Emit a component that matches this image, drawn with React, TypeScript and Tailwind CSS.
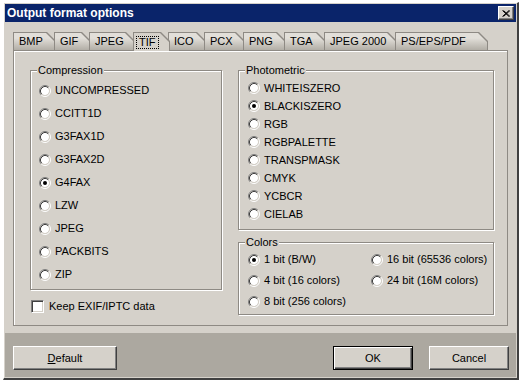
import React from "react";

/**
 * OutputFormatDialog — classic Windows-style "Output format options" dialog,
 * TIF tab selected.
 */

interface TabDef {
  label: string;
  /** width class incl. the 2px that slides under the next tab */
  width: string;
  active?: boolean;
  last?: boolean;
}

const TABS: TabDef[] = [
  { label: "BMP", width: "w-[43px]" },
  { label: "GIF", width: "w-[37px]" },
  { label: "JPEG", width: "w-[46px]" },
  { label: "TIF", width: "w-[37px]", active: true },
  { label: "ICO", width: "w-[38px]" },
  { label: "PCX", width: "w-[41px]" },
  { label: "PNG", width: "w-[43px]" },
  { label: "TGA", width: "w-[42px]" },
  { label: "JPEG 2000", width: "w-[73px]" },
  { label: "PS/EPS/PDF", width: "w-[93px]", last: true },
];

const COMPRESSION = [
  "UNCOMPRESSED",
  "CCITT1D",
  "G3FAX1D",
  "G3FAX2D",
  "G4FAX",
  "LZW",
  "JPEG",
  "PACKBITS",
  "ZIP",
];

const PHOTOMETRIC = [
  "WHITEISZERO",
  "BLACKISZERO",
  "RGB",
  "RGBPALETTE",
  "TRANSPMASK",
  "CMYK",
  "YCBCR",
  "CIELAB",
];

const COLORS = [
  "1 bit (B/W)",
  "16 bit (65536 colors)",
  "4 bit (16 colors)",
  "24 bit (16M colors)",
  "8 bit (256 colors)",
];

const SLANT =
  "[clip-path:polygon(0_0,calc(100%_-_9px)_0,100%_9px,100%_100%,0_100%)]";

function Radio({ checked }: { checked?: boolean }) {
  return (
    <svg width="12" height="12" viewBox="0 0 12 12" className="shrink-0">
      <circle cx="6" cy="6" r="4" fill="#fff" />
      <path d="M2.11 9.89A5.5 5.5 0 0 1 9.89 2.11" stroke="#808080" fill="none" />
      <path d="M9.89 2.11A5.5 5.5 0 0 1 2.11 9.89" stroke="#fff" fill="none" />
      <path d="M2.82 9.18A4.5 4.5 0 0 1 9.18 2.82" stroke="#404040" fill="none" />
      <path d="M9.18 2.82A4.5 4.5 0 0 1 2.82 9.18" stroke="#d4d0c8" fill="none" />
      {checked && <circle cx="6" cy="6" r="2" fill="#000" />}
    </svg>
  );
}

function RadioRow({
  label,
  checked,
  height,
}: {
  label: string;
  checked?: boolean;
  height: string;
}) {
  return (
    <div className={`flex items-center gap-[4px] ${height}`}>
      <Radio checked={checked} />
      <span className="leading-[13px]">{label}</span>
    </div>
  );
}

function Group({
  title,
  className,
  children,
}: {
  title: string;
  className: string;
  children: React.ReactNode;
}) {
  return (
    <div
      className={[
        "relative border border-[#8e8a84]",
        "shadow-[1px_1px_0_#fff,inset_1px_1px_0_#fff]",
        className,
      ].join(" ")}
    >
      {/* legend sits over the etched top line */}
      <span className="absolute -top-[7px] left-[6px] px-px bg-[#d5d1ca] leading-[13px]">
        {title}
      </span>
      {children}
    </div>
  );
}

function Tab({ tab }: { tab: TabDef }) {
  return (
    <div
      className={[
        "relative shrink-0",
        tab.width,
        tab.last ? "" : "-mr-[2px]",
        tab.active ? "z-10 h-[19px]" : "h-[18px]",
        SLANT,
        "bg-[#8e8a84]",
      ].join(" ")}
    >
      <div
        className={[
          "absolute left-px top-px right-px bottom-0 flex items-center pl-[5px]",
          SLANT,
          tab.active
            ? "bg-[#d5d1ca]"
            : "bg-linear-to-b from-[#e2dfd9] from-30% to-[#b2aea6]",
        ].join(" ")}
      >
        {tab.active ? (
          <span className="border border-dotted border-black px-[2px] leading-[11px] -ml-[3px]">
            {tab.label}
          </span>
        ) : (
          <span className="leading-[13px]">{tab.label}</span>
        )}
      </div>
    </div>
  );
}

function Win98Button({
  children,
  isDefault,
  className,
}: {
  children: React.ReactNode;
  isDefault?: boolean;
  className: string;
}) {
  return (
    <button
      type="button"
      className={[
        "h-[24px] flex items-center justify-center bg-[#d5d1ca] text-black",
        isDefault
          ? "border border-black shadow-[inset_1px_1px_0_#fff,inset_-1px_-1px_0_#404040,inset_-2px_-2px_0_#808080]"
          : "border border-t-white border-l-white border-r-[#404040] border-b-[#404040] shadow-[inset_-1px_-1px_0_#808080]",
        className,
      ].join(" ")}
    >
      {children}
    </button>
  );
}

export default function App() {
  return (
    <div className="min-h-screen bg-white pt-[2px] pl-[3px] font-['Liberation_Sans',Arial,sans-serif] text-[11px] text-black">
      {/* Window frame */}
      <div className="w-[516px] h-[378px] flex flex-col p-px bg-[#d5d1ca] border-l border-t border-l-white border-t-white border-r-2 border-b-2 border-r-[#404040] border-b-[#404040]">
        {/* Title bar */}
        <div className="h-[18px] shrink-0 flex items-center bg-[#0a246a] pl-[2px] pr-[2px]">
          <span className="flex-1 text-white font-bold text-[12px] leading-[14px]">
            Output format options
          </span>
          <div className="w-[16px] h-[14px] flex items-center justify-center bg-[#d5d1ca] border border-t-white border-l-white border-r-[#404040] border-b-[#404040] shadow-[inset_-1px_-1px_0_#808080]">
            <svg width="8" height="7" viewBox="0 0 8 7">
              <path d="M0.5 0.5L7 6.5M1.5 0.5L8 6.5M7 0.5L0.5 6.5M8 0.5L1.5 6.5" stroke="#000" />
            </svg>
          </div>
        </div>

        {/* Tabs + page */}
        <div className="flex-1 flex flex-col pt-[10px] px-[8px] pb-[7px]">
          <div className="relative z-10 flex h-[18px] items-start">
            {TABS.map((t) => (
              <Tab key={t.label} tab={t} />
            ))}
          </div>

          <div className="h-[276px] flex border border-[#8e8a84] shadow-[inset_1px_1px_0_#fff] pl-[16px] pt-[19px]">
            {/* Left column */}
            <div className="w-[192px] flex flex-col">
              <Group title="Compression" className="h-[220px] pt-[8px] pl-[8px]">
                {COMPRESSION.map((c) => (
                  <RadioRow key={c} label={c} checked={c === "G4FAX"} height="h-[23px]" />
                ))}
              </Group>
              <div className="mt-[10px] flex items-center gap-[5px] ml-px">
                <div className="w-[13px] h-[13px] bg-white border border-t-[#808080] border-l-[#808080] border-b-white border-r-white shadow-[inset_1px_1px_0_#404040,inset_-1px_-1px_0_#d4d0c8]" />
                <span className="leading-[13px]">Keep EXIF/IPTC data</span>
              </div>
            </div>

            {/* Right column */}
            <div className="w-[256px] ml-[16px] flex flex-col">
              <Group title="Photometric" className="h-[160px] pt-[8px] pl-[9px]">
                {PHOTOMETRIC.map((p) => (
                  <RadioRow key={p} label={p} checked={p === "BLACKISZERO"} height="h-[18px]" />
                ))}
              </Group>
              <Group title="Colors" className="mt-[12px] h-[73px] pt-[6px] pl-[9px]">
                <div className="grid grid-cols-[123px_1fr]">
                  {COLORS.map((c) => (
                    <RadioRow key={c} label={c} checked={c === "1 bit (B/W)"} height="h-[21px]" />
                  ))}
                </div>
              </Group>
            </div>
          </div>
        </div>

        {/* Button bar */}
        <div className="h-[44px] shrink-0 flex items-start bg-[#aca8a0] pt-[13px] pl-[8px] pr-[7px]">
          <Win98Button className="w-[104px]">
            <span>
              <span className="underline">D</span>efault
            </span>
          </Win98Button>
          <div className="flex-1" />
          <Win98Button isDefault className="w-[80px]">
            OK
          </Win98Button>
          <Win98Button className="w-[80px] ml-[16px]">Cancel</Win98Button>
        </div>
      </div>
    </div>
  );
}
